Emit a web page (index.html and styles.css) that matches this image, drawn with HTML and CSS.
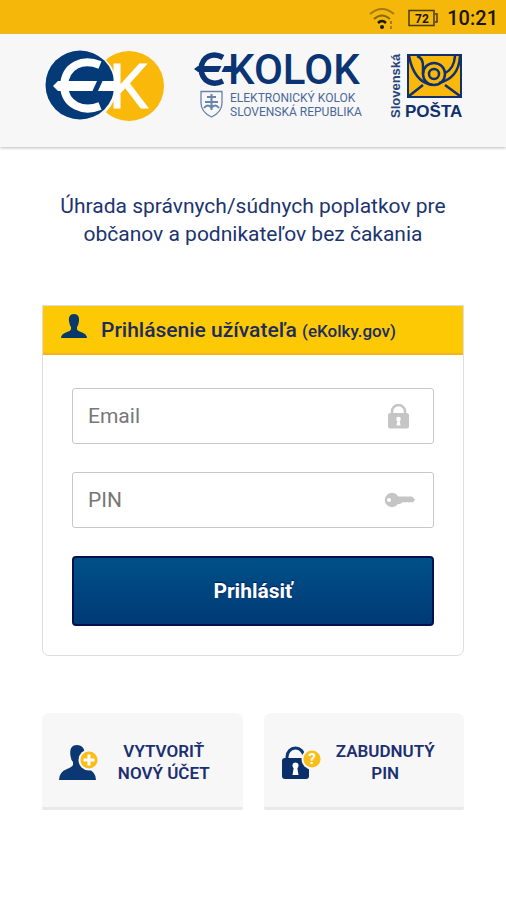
FILE: index.html
```html
<!DOCTYPE html>
<html lang="sk">
<head>
<meta charset="utf-8">
<meta name="viewport" content="width=device-width, initial-scale=1">
<title>eKolok</title>
<link rel="stylesheet" href="styles.css">
</head>
<body>
<div class="status">
  <svg class="wifi" viewBox="0 0 28 24" width="28" height="24" fill="none" stroke="#5a4a0c" stroke-width="2" aria-hidden="true">
    <path d="M2 8Q14-2 26 8" stroke="#a27c12"/><path d="M6 13Q14 6 22 13" stroke="#8a6a10"/><path d="M10 17Q14 13 18 17" stroke="#1d1a08" stroke-width="2.5"/><circle cx="14" cy="21" r="2" fill="#1d1a08" stroke="none"/><path d="M23 15v3M23 20v3" stroke="#8a6a10" stroke-width="1.5"/>
  </svg>
  <svg class="battery" viewBox="0 0 30 18" width="30" height="18" aria-hidden="true">
    <path d="M1 1.500H26V16.500H1ZM27 5h2v8h-2" fill="none" stroke="#4a3c08" stroke-width="1.500"/>
    <text x="14" y="13.500" text-anchor="middle" class="battery-text">72</text>
  </svg>
  <span class="clock">10:21</span>
</div>
<header class="brand">
  <svg viewBox="0 0 120 72" width="120" height="72" role="img" aria-label="EK">
    <circle cx="84" cy="36" r="35" fill="#fab90a"/>
    <circle cx="36" cy="36" r="36" fill="#f7f7f7"/>
    <circle cx="35" cy="35" r="34.500" fill="#043a78"/>
    <path d="M55 15C38 8 20 15 19 36C20 55 38 63 55 56" fill="none" stroke="#fff" stroke-width="8"/>
    <path d="M8 36L13 31H72V41H13Z" fill="#fff"/>
    <path d="M52.500 30L47 42H52.500L58 30Z" fill="#043a78"/>
    <text x="64" y="58" class="mark-k">K</text>
  </svg>
  <svg viewBox="0 0 168 70" width="168" height="70" role="img" aria-label="eKolok">
    <path d="M29 6.500C19 1 8 5 7 18C8 31 19 35 29 30" fill="none" stroke="#0b3474" stroke-width="5.500"/>
    <path d="M0 18L4 15H42V21H4Z" fill="#0b3474"/>
    <path d="M28 14L24 22H27L31 14Z" fill="#f7f7f7"/>
    <text x="34" y="33" class="wordmark">KOLOK</text>
    <g fill="none" stroke="#6984aa" stroke-width="1.300"><path d="M7 40.500H28V52Q28 61 17.500 66Q7 61 7 52Z"/><path d="M17.500 43V59M13 46H22M11 51H24M10 57Q14 52 17.500 57Q21 52 25 57" stroke-width="2"/></g>
    <text x="36" y="51" class="subtitle">ELEKTRONICKÝ KOLOK</text>
    <text x="36" y="65" class="subtitle">SLOVENSKÁ REPUBLIKA</text>
  </svg>
  <svg viewBox="0 0 74 70" width="74" height="70" role="img" aria-label="Slovenská pošta">
    <text transform="translate(10 67) rotate(-90)" class="post-side">Slovenská</text>
    <rect x="18" y="4" width="53" height="42" fill="#fab90a" stroke="#10306e" stroke-width="2"/>
    <g fill="none" stroke="#10306e" stroke-width="2.500"><circle cx="44" cy="23" r="5"/><circle cx="44" cy="23" r="11"/><path d="M19 5Q24 31 42 34M33 23V15Q33 7 27 5M55 22Q64 18 65 5M49 32Q69 27 70 5M19 45L33 34M70 45L55 34"/></g>
    <text x="15" y="66" class="post-name">POŠTA</text>
  </svg>
</header>
<main class="content">
  <p class="intro">Úhrada správnych/súdnych poplatkov pre občanov a podnikateľov bez čakania</p>
  <form class="card">
    <h1 class="card-head">
      <svg viewBox="0 0 26 24" width="26" height="24" fill="#073a6b" aria-hidden="true"><path d="M13 0C9 0 7.500 3 8 7Q8.500 11 10 13V15.500Q9 17 6 18Q0 20 0 24H26Q26 20 20 18Q17 17 16 15.500V13Q17.500 11 18 7C18.500 3 17 0 13 0Z"/></svg>
      <span>Prihlásenie užívateľa <small>(eKolky.gov)</small></span>
    </h1>
    <div class="card-body">
      <div class="field">
        <input type="email" placeholder="Email" aria-label="Email">
        <svg viewBox="0 0 32 26" width="32" height="26" aria-hidden="true"><path d="M9 12V8.500a6.500 6.500 0 0 1 13 0V12" fill="none" stroke="#c5c5c5" stroke-width="2.500"/><rect x="5" y="10" width="21" height="15.500" rx="2.500" fill="#c5c5c5"/><circle cx="15.500" cy="16" r="2.300" fill="#fff"/><path d="M14.500 17h2l1 5.500h-4z" fill="#fff"/></svg>
      </div>
      <div class="field">
        <input type="password" placeholder="PIN" aria-label="PIN">
        <svg viewBox="0 0 32 26" width="32" height="26" aria-hidden="true"><circle cx="9" cy="13" r="7.200" fill="#c5c5c5"/><path d="M13 9.500H29L32 12.500L30 15.500L28 15L26 15.500L24 15L22 15.500L20 15L17 17H13Z" fill="#c5c5c5"/><circle cx="6" cy="13" r="2" fill="#fff"/></svg>
      </div>
      <button type="submit" class="submit">Prihlásiť</button>
    </div>
  </form>
  <nav class="tiles">
    <a class="tile" href="#register">
      <svg viewBox="0 0 42 40" width="42" height="40" aria-hidden="true"><path d="M18 1C12 1 10.500 6 11.500 12Q12 16 14 18V21Q13 23 8 25Q0 28 0 36H37Q37 28 29 25Q24 23 23 21V18Q25 16 25.500 12C26.500 6 24 1 18 1Z" fill="#0b3872"/><circle cx="30" cy="16" r="10.500" fill="#f7f7f7"/><circle cx="30" cy="16" r="8.500" fill="#fbbd18"/><path d="M30 10.500V21.500M24.500 16H35.500" stroke="#fff" stroke-width="3"/></svg>
      <span>VYTVORIŤ<br>NOVÝ ÚČET</span>
    </a>
    <a class="tile" href="#forgot">
      <svg viewBox="0 0 42 40" width="42" height="40" aria-hidden="true"><path d="M6 17V13a8.500 9 0 0 1 17 0V17" fill="none" stroke="#0b3872" stroke-width="3"/><rect x="1" y="14" width="27" height="21" rx="3" fill="#0b2f6b"/><circle cx="14.500" cy="21.500" r="3" fill="#fff"/><path d="M13 22h3l1.500 9h-6z" fill="#fff"/><circle cx="31" cy="15" r="10.500" fill="#f7f7f7"/><circle cx="31" cy="15" r="8.500" fill="#fbbd18"/><text x="31" y="20" text-anchor="middle" class="question">?</text></svg>
      <span>ZABUDNUTÝ<br>PIN</span>
    </a>
  </nav>
</main>
</body>
</html>
```
FILE: styles.css
```css
* { box-sizing: border-box; }
body {
  margin: 0;
  background: #fff;
  color: #1c3470;
  font-family: Roboto, "Liberation Sans", sans-serif;
}
svg { display: block; flex: none; overflow: visible; }
.status {
  display: flex;
  align-items: center;
  justify-content: flex-end;
  height: 34px;
  padding: 2px 8px 0;
  background: #f5b70a;
  color: #1a1606;
}
.wifi { margin-right: 12px; }
.battery { margin-right: 9px; }
.battery-text { font: bold 12px Roboto, sans-serif; fill: #1a1606; }
.clock { font-size: 20px; font-weight: 500; }
.brand {
  display: flex;
  align-items: center;
  justify-content: space-between;
  height: 113px;
  padding: 0 42px 10px 45px;
  background: #f7f7f7;
  box-shadow: 0 1px 3px #bbb;
}
.mark-k { font: 400 62px Roboto, sans-serif; fill: #fff; stroke: #fff; stroke-width: 1; }
.wordmark { font: 500 42px Roboto, sans-serif; fill: #0b3474; }
.subtitle { font: 12px Roboto, sans-serif; fill: #4a699a; }
.post-side { font: bold 13px "Liberation Sans", sans-serif; fill: #294679; }
.post-name { font: bold 17px "Liberation Sans", sans-serif; fill: #10306e; }
.content { padding: 0 42px; }
.intro {
  margin: 45px 0 57px;
  font-size: 21px;
  line-height: 28px;
  text-align: center;
}
.card {
  border: 1px solid #dedede;
  border-radius: 0 0 7px 7px;
}
.card-head {
  display: flex;
  align-items: center;
  gap: 14px;
  height: 49px;
  margin: 0;
  padding: 0 18px;
  background: #fdc904;
  border-bottom: 2px solid #f5b21c;
  color: #1c2c5c;
  font-size: 21px;
  font-weight: 500;
}
.card-head svg { margin-bottom: 8px; }
.card-head small { font-size: 17px; }
.card-body {
  display: grid;
  gap: 28px;
  padding: 33px 29px 29px;
}
.field {
  display: flex;
  align-items: center;
  height: 56px;
  padding: 0 18px 0 15px;
  border: 1px solid #c8c8c8;
  border-radius: 3px;
}
.field input {
  flex: 1;
  min-width: 0;
  height: 100%;
  padding: 0;
  border: 0;
  outline: 0;
  background: none;
  font: 21px Roboto, sans-serif;
}
.field input::placeholder { color: #777; opacity: 1; }
.submit {
  height: 70px;
  border: 2px solid #03104e;
  border-radius: 4px;
  background: linear-gradient(#005088, #003a76);
  color: #fff;
  font: bold 21px Roboto, sans-serif;
  text-shadow: 0 -1px 1px #001a60;
}
.tiles {
  display: grid;
  grid-template-columns: 1fr 1fr;
  gap: 21px;
  margin-top: 57px;
}
.tile {
  display: flex;
  align-items: center;
  gap: 10px;
  height: 97px;
  padding: 4px 26px 0 17px;
  border-bottom: 3px solid #e9e9e9;
  border-radius: 7px 7px 2px 2px;
  background: #f7f7f7;
  color: #1c2f72;
  font-size: 17px;
  font-weight: 600;
  line-height: 22px;
  text-align: center;
  text-decoration: none;
}
.tile svg { margin-top: 3px; }
.tile span { flex: 1; }
.question { font: bold 15px Roboto, sans-serif; fill: #fff; }
```
